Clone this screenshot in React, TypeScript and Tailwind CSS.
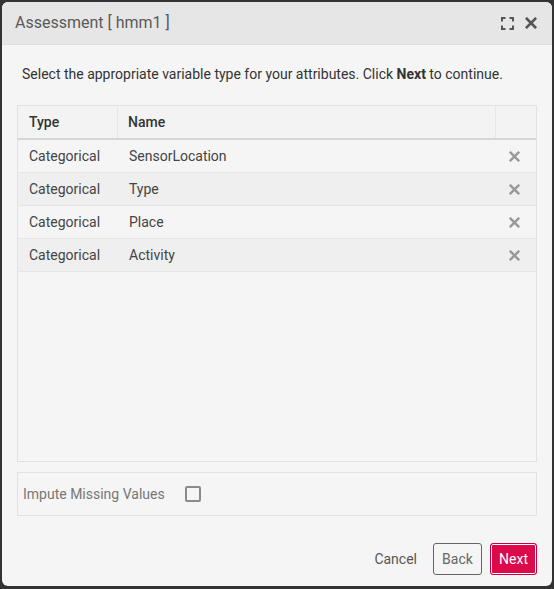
import React from "react";

const rows = ["SensorLocation", "Type", "Place", "Activity"];

function MaximizeIcon() {
  return (
    <svg width="13" height="13" viewBox="0 0 13 13" fill="none" stroke="#555" strokeWidth="2">
      <path d="M1 4.5V1h3.5M8.5 1H12v3.5M12 8.5V12H8.5M4.5 12H1V8.5" />
    </svg>
  );
}

function CloseIcon({ color, size }: { color: string; size: number }) {
  return (
    <svg width={size} height={size} viewBox="0 0 10 10" fill="none" stroke={color} strokeWidth="2.2" strokeLinecap="square">
      <path d="M1.5 1.5l7 7M8.5 1.5l-7 7" />
    </svg>
  );
}

export default function App() {
  return (
    <div className="min-h-[589px] bg-[#333333] px-[2px] pt-[2px] pb-[3px] font-['Roboto',sans-serif]">
      <div className="flex h-[584px] flex-col overflow-hidden rounded-[6px] bg-[#f5f5f5]">
        {/* Header */}
        <div className="flex h-[43px] items-center justify-between border-b border-[#dedede] bg-[#e6e6e6] pl-[13px] pr-[15px]">
          <span className="text-[16px] text-[#5a5a5a]">Assessment [ hmm1 ]</span>
          <div className="flex items-center gap-[11px]">
            <MaximizeIcon />
            <CloseIcon color="#555" size={12} />
          </div>
        </div>

        {/* Body */}
        <div className="flex flex-1 flex-col px-[15px]">
          <p className="mt-[19px] mb-[21px] pl-[5px] text-[14px] leading-[20px] text-[#333]">
            Select the appropriate variable type for your attributes. Click <span className="font-bold">Next</span> to continue.
          </p>

          <div className="flex h-[357px] flex-col border border-[#e2e2e2] bg-[#f5f5f5]">
            <div className="flex h-[34px] border-b-2 border-[#d6d6d6] bg-[#f3f3f3] text-[14px] font-medium text-[#333]">
              <div className="flex w-[100px] items-center border-r border-[#e6e6e6] pl-[11px]">Type</div>
              <div className="flex flex-1 items-center border-r border-[#e6e6e6] pl-[10px]">Name</div>
              <div className="w-[40px]" />
            </div>
            {rows.map((name, i) => (
              <div
                key={name}
                className={`flex h-[33px] items-center border-b border-[#e6e6e6] text-[14px] text-[#444] ${
                  i % 2 === 1 ? "bg-[#efefef]" : "bg-[#f5f5f5]"
                }`}
              >
                <div className="w-[100px] pl-[11px]">Categorical</div>
                <div className="flex-1 pl-[11px]">{name}</div>
                <div className="flex w-[40px] justify-center pr-[4px]">
                  <CloseIcon color="#999" size={11} />
                </div>
              </div>
            ))}
          </div>

          <div className="mt-[10px] flex h-[44px] items-center border border-[#e2e2e2] pl-[5px]">
            <span className="text-[14px] text-[#777]">Impute Missing Values</span>
            <span className="ml-[20px] h-[16px] w-[16px] rounded-[2px] border-2 border-[#8a8a8a]" />
          </div>

          <div className="mt-[27px] flex items-center justify-end">
            <button className="mr-[16px] text-[14px] text-[#555]">Cancel</button>
            <button className="mr-[8px] h-[32px] w-[49px] rounded-[3px] border border-[#666] text-[14px] text-[#666]">
              Back
            </button>
            <button className="h-[32px] w-[47px] rounded-[3px] border border-[#c4003d] bg-[#dc0a4b] text-[14px] text-white shadow-[inset_0_0_0_1px_#ffffff]">
              Next
            </button>
          </div>
        </div>
      </div>
    </div>
  );
}
